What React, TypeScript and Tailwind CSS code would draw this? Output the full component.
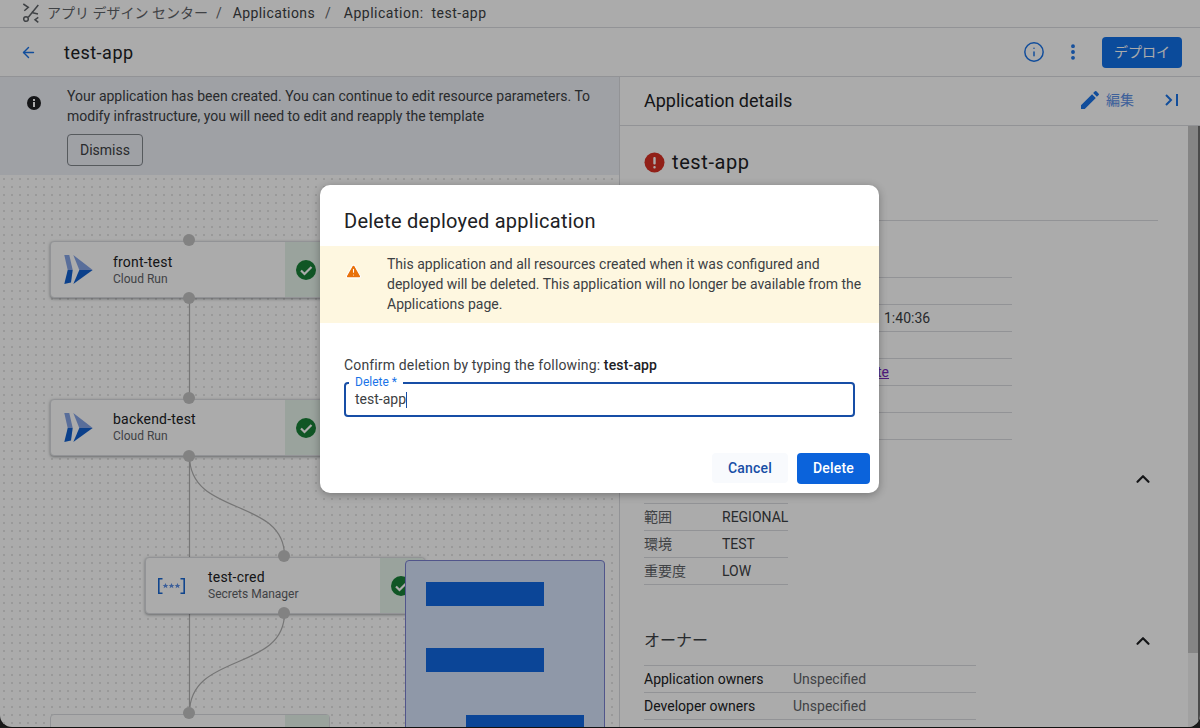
import { AlertTriangle, ArrowLeft, ChevronUp, Info, MoreVertical } from 'lucide-react';

function CloudRunIcon() {
  return (
    <svg width="30" height="30" viewBox="0 0 30 30" className="shrink-0">
      <path d="M1.300 0H6.300L9.700 15H4.700z" fill="#85a4e6" />
      <path d="M4.700 15H9.700L8 27.500 1.300 29z" fill="#1160d0" />
      <path d="M10.300 0L29.700 15H16.300z" fill="#85a4e6" />
      <path d="M16.300 15H29.700L10.300 29z" fill="#1160d0" />
    </svg>
  );
}

function SecretsIcon() {
  return (
    <svg width="27" height="16" viewBox="0 0 27 16" fill="none" className="shrink-0">
      <path d="M4.500 .8H.8v14.400h3.700M22.500 .8h3.700v14.400h-3.700" stroke="#1967d2" strokeWidth="1.600" />
      <g fill="#5c8fe6">
        <path d="M7.500 5l.9 2h2l-1.600 1.300.6 2-1.900-1.200-1.900 1.200.6-2L4.600 7h2z" />
        <path d="M13.500 5l.9 2h2l-1.600 1.300.6 2-1.900-1.200-1.900 1.200.6-2L10.600 7h2z" />
        <path d="M19.500 5l.9 2h2l-1.600 1.300.6 2-1.900-1.200-1.900 1.200.6-2L16.600 7h2z" />
      </g>
    </svg>
  );
}

function CheckBadge() {
  return (
    <svg width="20" height="20" viewBox="0 0 20 20" className="shrink-0">
      <circle cx="10" cy="10" r="10" fill="#188038" />
      <path d="M5 10.500l3.500 3.500L15.500 7" fill="none" stroke="white" strokeWidth="2.200" />
    </svg>
  );
}

function Port({ className }: { className: string }) {
  return <div className={`absolute h-[12px] w-[12px] rounded-full bg-[#c2c2c2] ${className}`} />;
}

function Node({ name, sub, icon, className, textGap }: { name: string; sub: string; icon: React.ReactNode; className: string; textGap: string }) {
  return (
    <div className={`absolute flex h-[57px] w-[280px] rounded-[4px] border border-[#dadce0] bg-white shadow-[0_1px_3px_rgba(60,64,67,.5)] ${className}`}>
      <div className="flex w-[234px] items-center">
        <div className="pl-[12px]">{icon}</div>
        <div className={textGap}>
          <div className="text-[14px] leading-[18px] tracking-[.2px] text-[#202124]">{name}</div>
          <div className="text-[12px] leading-[16px] text-[#5f6368]">{sub}</div>
        </div>
      </div>
      <div className="flex flex-1 items-center rounded-r-[4px] bg-[#e6f4ea] pl-[11px]">
        <CheckBadge />
      </div>
    </div>
  );
}

function Row({ label, value, labelClass = 'w-[78px] text-[#5f6368]', valueClass = 'text-[#3c4043]' }: { label: string; value: string; labelClass?: string; valueClass?: string }) {
  return (
    <div className="flex h-[27px] items-center border-b border-[#dadce0] text-[14px]">
      <div className={`shrink-0 whitespace-nowrap ${labelClass}`}>{label}</div>
      <div className={`whitespace-nowrap ${valueClass}`}>{value}</div>
    </div>
  );
}

export default function App() {
  return (
    <div className="relative h-[728px] w-[1200px] overflow-hidden bg-[#1a1a1a]" style={{ fontFamily: 'Roboto, "Noto Sans CJK JP", sans-serif' }}>
      <div className="flex h-[727px] flex-col overflow-hidden rounded-b-[12px] bg-white">
        {/* breadcrumb */}
        <div className="flex h-[28px] shrink-0 items-center border-b border-[#dadce0] pl-[22px] text-[14px] text-[#3c4043]">
          <svg width="19" height="21" viewBox="0 0 19 21" fill="none" stroke="#5f6368" strokeWidth="1.500">
            <path d="M1.300 1l5 3.300-4 3.400M16.300 2L6.300 14.300M9.500 9.500L16 11M16.300 14.300L13 16.700l3.300 2.600" />
            <circle cx="4" cy="16" r="2.300" />
          </svg>
          <span className="ml-[6px] text-[#5f6368]">アプリ デザイン センター</span>
          <span className="ml-[8px] text-[#5f6368]">/</span>
          <span className="ml-[11px] tracking-[.4px]">Applications</span>
          <span className="ml-[10px] text-[#5f6368]">/</span>
          <span className="ml-[13px] whitespace-pre tracking-[.5px]">Application:  test-app</span>
        </div>

        {/* title bar */}
        <div className="flex h-[49px] shrink-0 items-center border-b border-[#dadce0] pl-[20px] pr-[18px]">
          <ArrowLeft size={17} color="#1a73e8" strokeWidth={2} />
          <span className="ml-[27px] text-[18px] tracking-[.5px] text-[#202124]">test-app</span>
          <div className="ml-auto flex items-center">
            <Info size={22} color="#1a73e8" strokeWidth={1.6} />
            <MoreVertical size={20} color="#1a73e8" strokeWidth={2.600} className="ml-[18px]" />
            <button className="ml-[19px] h-[31px] w-[80px] rounded-[4px] bg-[#1170e8] text-[14px] text-white">デプロイ</button>
          </div>
        </div>

        <div className="flex min-h-0 flex-1">
          {/* left: banner + canvas */}
          <div className="flex w-[620px] shrink-0 flex-col border-r border-[#dadce0]">
            <div className="flex h-[98px] shrink-0 bg-[#edf0f7]">
              <svg width="14" height="14" viewBox="0 0 14 14" className="ml-[27px] mt-[19px] shrink-0">
                <circle cx="7" cy="7" r="7" fill="#202124" />
                <rect x="6" y="6" width="2" height="5" fill="white" />
                <rect x="6" y="3" width="2" height="2" fill="white" />
              </svg>
              <div className="ml-[26px] pt-[9px]">
                <p className="w-[540px] text-[14px] leading-[20px] text-[#3c4043]">
                  Your application has been created. You can continue to edit resource parameters. To modify infrastructure, you will need to edit and reapply the template
                </p>
                <button className="mt-[8px] h-[32px] w-[76px] rounded-[4px] border border-[#80868b] text-[14px] text-[#3c4043]">Dismiss</button>
              </div>
            </div>

            <div className="relative flex-1 bg-[radial-gradient(#e4e4e4_1px,transparent_1px)] bg-[size:8px_8px]">
              <svg className="absolute left-0 top-0" width="620" height="553" fill="none" stroke="#b0b0b0" strokeWidth="1.200">
                <path d="M189.500 123V223M189.500 281V538" />
                <path d="M189.500 281C189.500 342 284.500 322 284.500 381" />
                <path d="M284.500 438C284.500 497 189.500 477 189.500 538" />
              </svg>
              <Node name="front-test" sub="Cloud Run" icon={<CloudRunIcon />} className="left-[50px] top-[66px]" textGap="ml-[20px]" />
              <Node name="backend-test" sub="Cloud Run" icon={<CloudRunIcon />} className="left-[50px] top-[224px]" textGap="ml-[20px] -mt-px" />
              <Node name="test-cred" sub="Secrets Manager" icon={<SecretsIcon />} className="left-[145px] top-[382px]" textGap="ml-[23px] -mt-px" />
              <div className="absolute left-[50px] top-[539px] h-[57px] w-[280px] rounded-[4px] border border-[#dadce0] bg-white">
                <div className="ml-[234px] h-full bg-[#e6f4ea]" />
              </div>
              <Port className="left-[183px] top-[59px]" />
              <Port className="left-[183px] top-[117px]" />
              <Port className="left-[183px] top-[217px]" />
              <Port className="left-[183px] top-[275px]" />
              <Port className="left-[278px] top-[375px]" />
              <Port className="left-[278px] top-[432px]" />
              <Port className="left-[183px] top-[532px]" />
              <div className="absolute left-[405px] top-[385px] h-[200px] w-[200px] rounded-[4px] border border-[#7a7fd0] bg-[#d6e3fb]">
                <div className="ml-[20px] mt-[21px] h-[24px] w-[118px] bg-[#1168e2]" />
                <div className="ml-[20px] mt-[42px] h-[24px] w-[118px] bg-[#1168e2]" />
                <div className="ml-[60px] mt-[43px] h-[24px] w-[118px] bg-[#1168e2]" />
              </div>
            </div>
          </div>

          {/* right: details */}
          <div className="flex min-w-0 flex-1 flex-col">
            <div className="flex h-[49px] shrink-0 items-center border-b border-[#dadce0] pb-[2px] pl-[24px] pr-[21px]">
              <span className="text-[18px] text-[#202124]">Application details</span>
              <svg width="24" height="24" viewBox="0 0 24 24" fill="#1a73e8" className="ml-auto">
                <path d="M3 17.250V21h3.750L17.810 9.940l-3.750-3.750L3 17.250zM20.710 7.040a1 1 0 000-1.410l-2.340-2.340a1 1 0 00-1.410 0l-1.830 1.830 3.750 3.750 1.830-1.830z" />
              </svg>
              <span className="ml-[4px] text-[14px] text-[#5c8fe6]">編集</span>
              <svg width="14" height="12" viewBox="0 0 14 12" fill="none" stroke="#1a73e8" strokeWidth="2" className="ml-[31px]">
                <path d="M1 1l5 5-5 5M12 0v12" />
              </svg>
            </div>
            <div className="flex min-h-0 flex-1">
              <div className="min-w-0 flex-1 pl-[24px] pr-[30px]">
                <div className="flex h-[95px] items-start border-b border-[#dadce0] pt-[24px]">
                  <svg width="21" height="21" viewBox="0 0 21 21" className="mt-[2px]">
                    <circle cx="10.500" cy="10.500" r="10" fill="#d93025" />
                    <rect x="9.300" y="5" width="2.400" height="7.500" rx="1" fill="white" />
                    <rect x="9.300" y="14" width="2.400" height="2.400" rx="1" fill="white" />
                  </svg>
                  <span className="ml-[7px] text-[20px] leading-[24px] tracking-[.6px] text-[#202124]">test-app</span>
                </div>
                <div className="w-[368px] pt-[30px]">
                  <div className="h-[27px] border-b border-[#dadce0]" />
                  <Row label="" value="" />
                  <Row label="" value="1:40:36" labelClass="w-[240px]" />
                  <Row label="" value="" />
                  <Row label="" value="te" labelClass="w-[233px]" valueClass="text-[#7627bb] underline" />
                  <Row label="" value="" />
                  <Row label="" value="" />
                </div>
                <div className="mt-[21px] flex h-[36px] justify-end pr-[4px] pt-[7px]">
                  <ChevronUp size={22} color="#202124" strokeWidth={2.400} />
                </div>
                <div className="mt-[6px] w-[144px] border-t border-[#dadce0]">
                  <Row label="範囲" value="REGIONAL" />
                  <Row label="環境" value="TEST" />
                  <Row label="重要度" value="LOW" />
                </div>
                <div className="mt-[38px] flex h-[36px] items-center justify-between pr-[4px] text-[16px] text-[#3c4043]">
                  <span>オーナー</span>
                  <ChevronUp size={22} color="#202124" strokeWidth={2.400} />
                </div>
                <div className="mt-[6px] w-[332px] border-t border-[#dadce0]">
                  <Row label="Application owners" value="Unspecified" labelClass="w-[149px] text-[#202124]" valueClass="text-[#5f6368]" />
                  <Row label="Developer owners" value="Unspecified" labelClass="w-[149px] text-[#202124]" valueClass="text-[#5f6368]" />
                </div>
              </div>
              <div className="w-[12px] shrink-0 border-r-[2px] border-[#707070] bg-[#f1f1f1]">
                <div className="h-[527px] w-[10px] bg-[#c6c6c6]" />
              </div>
            </div>
          </div>
        </div>
      </div>

      {/* scrim + dialog */}
      <div className="absolute inset-0 rounded-b-[12px] bg-black/33" />
      <div className="absolute left-[320px] top-[185px] h-[308px] w-[559px] rounded-[10px] bg-white shadow-[0_2px_8px_rgba(0,0,0,.3)]">
        <h2 className="pl-[24px] pt-[22px] text-[20px] leading-[28px] tracking-[.25px] text-[#202124]">Delete deployed application</h2>
        <div className="mt-[11px] flex h-[77px] bg-[#fef7e0]">
          <AlertTriangle size={17} color="white" fill="#e8710a" strokeWidth={1.500} className="ml-[25px] mt-[17px] shrink-0" />
          <p className="ml-[25px] w-[480px] pt-[8px] text-[14px] leading-[20px] text-[#3c4043]">
            This application and all resources created when it was configured and deployed will be deleted. This application will no longer be available from the Applications page.
          </p>
        </div>
        <p className="ml-[24px] mt-[32px] text-[14px] leading-[20px] tracking-[.15px] text-[#3c4043]">
          Confirm deletion by typing the following: <span className="font-medium text-[#202124]">test-app</span>
        </p>
        <div className="relative ml-[24px] mt-[7px] flex h-[35px] w-[511px] items-center rounded-[4px] border-2 border-[#174ea6] pl-[9px] text-[14px] text-[#3c4043]">
          <span className="absolute left-[3px] top-[-9px] bg-white px-[6px] text-[12px] leading-[14px] text-[#1a73e8]">Delete *</span>
          test-app<span className="h-[16px] w-px bg-[#174ea6]" />
        </div>
        <div className="mt-[36px] flex justify-end gap-[9px] pr-[9px]">
          <button className="h-[30px] w-[76px] rounded-[4px] bg-[#f8fafd] text-[14px] font-medium tracking-[.2px] text-[#174ea6]">Cancel</button>
          <button className="h-[31px] w-[73px] rounded-[4px] bg-[#0b63db] text-[14px] font-medium tracking-[.2px] text-white">Delete</button>
        </div>
      </div>
    </div>
  );
}
